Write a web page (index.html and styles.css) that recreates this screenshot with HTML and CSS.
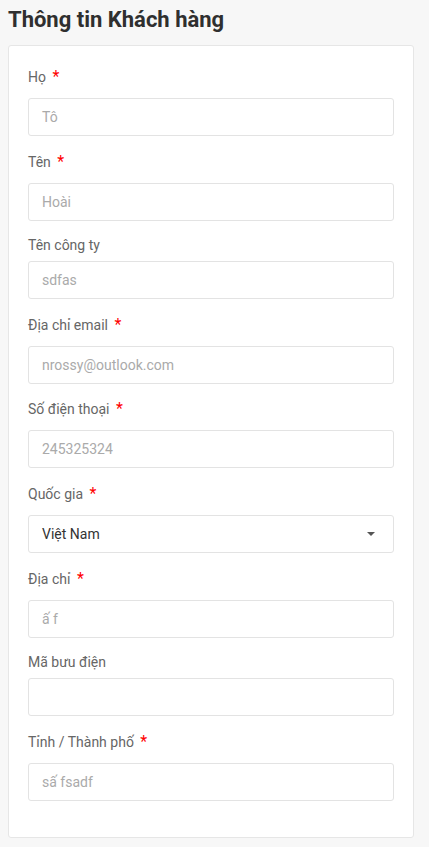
FILE: index.html
```html
<!DOCTYPE html>
<html lang="vi">
<head>
<meta charset="utf-8">
<link rel="stylesheet" href="styles.css">
</head>
<body>
<h1 class="title">Thông tin Khách hàng</h1>
<div class="card">
  <div class="field">
    <label class="label req">Họ <span class="star">*</span></label>
    <div class="input placeholder">Tô</div>
  </div>
  <div class="field">
    <label class="label req">Tên <span class="star">*</span></label>
    <div class="input placeholder">Hoài</div>
  </div>
  <div class="field">
    <label class="label">Tên công ty</label>
    <div class="input placeholder">sdfas</div>
  </div>
  <div class="field">
    <label class="label req">Địa chỉ email <span class="star">*</span></label>
    <div class="input placeholder">nrossy@outlook.com</div>
  </div>
  <div class="field">
    <label class="label req">Số điện thoại <span class="star">*</span></label>
    <div class="input placeholder">245325324</div>
  </div>
  <div class="field">
    <label class="label req">Quốc gia <span class="star">*</span></label>
    <div class="input select"><span>Việt Nam</span><span class="caret"></span></div>
  </div>
  <div class="field">
    <label class="label req">Địa chỉ <span class="star">*</span></label>
    <div class="input placeholder">ấ f</div>
  </div>
  <div class="field">
    <label class="label">Mã bưu điện</label>
    <div class="input placeholder"></div>
  </div>
  <div class="field">
    <label class="label req">Tỉnh / Thành phố <span class="star">*</span></label>
    <div class="input placeholder">sấ fsadf</div>
  </div>
</div>
</body>
</html>
```
FILE: styles.css
```css
html, body {
  margin: 0;
  padding: 0;
  background: #f7f7f7;
}
body {
  padding: 0 8px;
  font-family: Roboto, "Noto Sans", sans-serif;
  color: #333;
}
.title {
  margin: 0;
  padding-top: 5px;
  height: 45px;
  box-sizing: border-box;
  font-size: 22px;
  font-weight: 700;
  line-height: 30px;
  color: #2f2f2f;
}
.card {
  width: 406px;
  box-sizing: border-box;
  background: #fff;
  border: 1px solid #e6e6e6;
  border-radius: 3px;
  padding: 22px 19px 36px;
  display: flex;
  flex-direction: column;
  gap: 16.6px;
}
.field {
  display: flex;
  flex-direction: column;
}
.label {
  display: block;
  font-size: 14px;
  line-height: 17px;
  color: #666;
  margin-bottom: 7px;
}
.label.req {
  margin-bottom: 12px;
}
.star {
  color: #f00;
  font-size: 16px;
  margin-left: 3px;
}
.input {
  height: 38px;
  box-sizing: border-box;
  border: 1px solid #e3e3e3;
  border-radius: 3px;
  padding: 0 13px;
  display: flex;
  align-items: center;
  font-size: 14px;
  background: #fff;
}
.placeholder {
  color: #aaa;
}
.select {
  color: #333;
  justify-content: space-between;
  padding-right: 18px;
}
.caret {
  width: 0;
  height: 0;
  border-left: 4px solid transparent;
  border-right: 4px solid transparent;
  border-top: 4px solid #555;
}
```
